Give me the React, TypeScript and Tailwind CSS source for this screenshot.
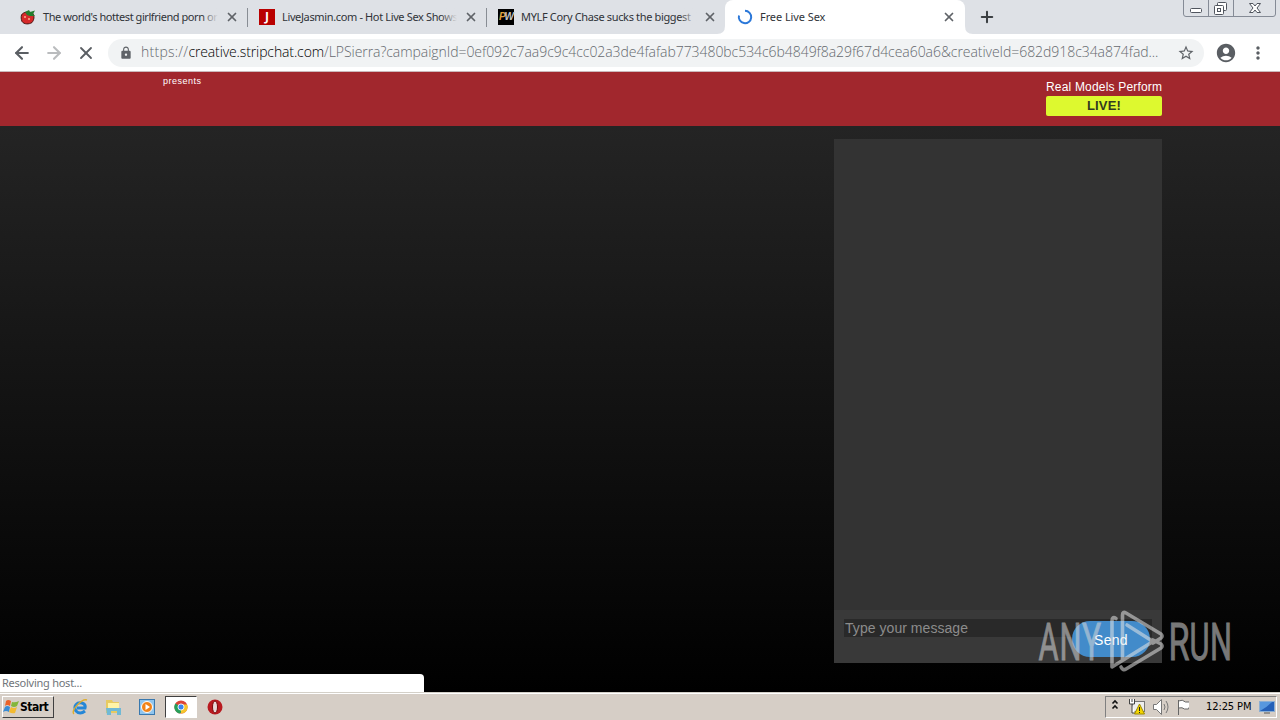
import React from 'react';
import { X, Plus, ArrowLeft, ArrowRight } from 'lucide-react';
import { MdLock, MdStarBorder, MdAccountCircle, MdMoreVert } from 'react-icons/md';

interface TabProps {
  title: string;
  icon: React.ReactNode;
  titleClass: string;
  active?: boolean;
}

function Tab({ title, icon, titleClass, active }: TabProps) {
  return (
    <div className={active ? 'relative flex h-[34px] w-[240px] items-center rounded-t-lg bg-white pl-3' : 'relative flex h-[34px] w-[239px] items-center pl-3'}>
      {icon}
      <div className="ml-[7px] h-4 w-[176px] whitespace-nowrap text-[11px] leading-4 text-[#303338]">
        <span className={titleClass}>{title}</span>
      </div>
      {!active && <div className="absolute left-[194px] top-2 h-[18px] w-[20px] bg-gradient-to-r from-[#dee1e6]/0 to-[#dee1e6] to-80%" />}
      <X className="absolute left-[217px] top-[10px] h-[14px] w-[14px] text-[#5f6368]" strokeWidth={3} />
    </div>
  );
}

// Favicons
function Strawberry() {
  return (
    <svg className="h-4 w-4 shrink-0" viewBox="0 0 16 16">
      <path d="M1.500 6C3.500 2.500 9 2.500 12.500 4C15 7 14 11 12 13.500C9 15.500 4 15.500 2 12.500C1 10 1 8 1.500 6Z" fill="#d6292a" stroke="#4a1512" />
      <path d="M5 3L9 1L10 3L15 1.500L13 5L15 7L10 7L7 6Z" fill="#237d2d" />
      <path d="M4 7h2v2H4zM8 9h2v2H8z" fill="#f28c72" />
    </svg>
  );
}

function JasminIcon() {
  return (
    <div className="flex h-4 w-4 shrink-0 items-center justify-center bg-[#b90000] font-['Open_Sans',sans-serif] text-[12px] font-bold leading-4 text-white">J</div>
  );
}

function PwIcon() {
  return (
    <div className="flex h-4 w-4 shrink-0 items-center justify-center bg-black font-['Liberation_Sans',sans-serif] text-[10px] font-bold italic leading-4 tracking-[-1px]">
      <span className="text-[#e0a33e]">P</span>
      <span className="text-[#c4c4c4]">W</span>
    </div>
  );
}

function Spinner() {
  return (
    <svg className="h-4 w-4 shrink-0" viewBox="0 0 16 16" fill="none">
      <path d="M8 1.8A6.2 6.2 0 1 1 2 6.4" stroke="#2b78d9" strokeWidth="2" />
    </svg>
  );
}

function WindowButtons() {
  return (
    <svg className="absolute right-[3px] top-0 h-[18px] w-[94px]" viewBox="0 0 94 18" fill="none" stroke="#858b96">
      <path d="M.5 0V14Q.5 16.5 3 16.5H90Q92.500 16.500 92.500 14V0M25.500 0V16M50.500 0V16" />
      <g stroke="#50555e" fill="#fff">
        <rect x="7.500" y="8.500" width="11" height="4" rx="1" />
        <rect x="34.500" y="2.500" width="9" height="8" rx="1" />
        <rect x="31.500" y="5.500" width="9" height="9" rx="1" />
        <rect x="34.500" y="8.500" width="3" height="3" />
        <path d="M66.500 3.500H70L72 6L74 3.500H77.500L74 8L77.500 12.500H74L72 10L70 12.500H66.500L70 8Z" />
      </g>
    </svg>
  );
}

function TabStrip() {
  return (
    <div className="relative flex h-[34px] bg-[#dee1e6] pl-2">
      <Tab title="The world's hottest girlfriend porn or" icon={<Strawberry />} titleClass="tracking-[-0.44px]" />
      <div className="absolute left-[247px] top-2 h-[19px] w-px bg-[#888d94]" />
      <Tab title="LiveJasmin.com - Hot Live Sex Shows" icon={<JasminIcon />} titleClass="tracking-[-0.36px]" />
      <div className="absolute left-[486px] top-2 h-[19px] w-px bg-[#888d94]" />
      <Tab title="MYLF Cory Chase sucks the biggest" icon={<PwIcon />} titleClass="tracking-[-0.35px]" />
      <Tab title="Free Live Sex" icon={<Spinner />} titleClass="tracking-[-0.08px]" active />
      <svg className="absolute left-[717px] top-[26px] h-2 w-[256px]" viewBox="0 0 256 8" fill="#fff">
        <path d="M0 8Q8 8 8 0V8ZM248 0Q248 8 256 8H248Z" />
      </svg>
      <Plus className="ml-[13px] mt-2 h-[18px] w-[18px] text-[#3c4043]" strokeWidth={2.7} />
      <WindowButtons />
    </div>
  );
}

function Toolbar() {
  return (
    <div className="flex h-[38px] items-center border-b border-[#cbb9bb] bg-white">
      <ArrowLeft className="ml-3 h-5 w-5 text-[#5a5e63]" strokeWidth={2.5} />
      <ArrowRight className="ml-3 h-5 w-5 text-[#babcbe]" strokeWidth={2.5} />
      <X className="ml-3 h-5 w-5 text-[#5a5e63]" strokeWidth={2.2} />
      <div className="ml-3 flex h-7 w-[1096px] items-center rounded-full bg-[#f1f3f4] pl-[11px]">
        <MdLock className="h-[14px] w-[14px] text-[#5f6368]" />
        <div className="mb-[2px] ml-2 w-[1026px] shrink-0 whitespace-nowrap font-['Open_Sans',sans-serif] text-[14px] font-light leading-5 text-[#65696e]">
          <span className="tracking-[-0.055px]">
            <span className="tracking-[0.25px]">https://</span>
            <span className="tracking-[-0.12px] text-black">creative.stripchat.com</span>/LPSierra?campaignId=0ef092c7aa9c9c4cc02a3de4fafab773480bc534c6b4849f8a29f67d4cea60a6&amp;creativeId=682d918c34a874fad...
          </span>
        </div>
        <MdStarBorder className="ml-[10px] h-[18px] w-[18px] shrink-0 text-[#5f6368]" />
      </div>
      <MdAccountCircle className="ml-[11px] h-[22px] w-[22px] text-[#5a5e63]" />
      <MdMoreVert className="ml-[11px] h-5 w-5 text-[#5a5e63]" />
    </div>
  );
}

function Watermark() {
  return (
    <svg className="pointer-events-none absolute left-[1035px] top-[605px] z-10 h-[72px] w-[204px]" viewBox="0 0 204 72" fill="none" opacity="0.55">
      <g fill="#d8d8d8" stroke="#d8d8d8" strokeWidth="0.9" fontFamily="Roboto" fontSize="52">
        <text x="3.500" y="54.500" textLength="20" lengthAdjust="spacingAndGlyphs">A</text>
        <text x="24.500" y="54.500" textLength="22" lengthAdjust="spacingAndGlyphs">N</text>
        <text x="47" y="54.500" textLength="19" lengthAdjust="spacingAndGlyphs">Y</text>
        <text x="133.500" y="54.500" textLength="21" lengthAdjust="spacingAndGlyphs">R</text>
        <text x="154.500" y="54.500" textLength="20" lengthAdjust="spacingAndGlyphs">U</text>
        <text x="175" y="54.500" textLength="22" lengthAdjust="spacingAndGlyphs">N</text>
      </g>
      <g stroke="#e4e4e4" strokeWidth="3.600" strokeLinejoin="round" strokeLinecap="round">
        <path d="M81 13.500Q77 11 77 16V62L118 36.500L92 20" />
        <path d="M87.500 54V10Q87.500 6 91 8L126 29Q128 31 126 33L118 38" />
        <path d="M86 62Q88 66 91 64L126 43Q128 41 126 39L118 35" />
      </g>
    </svg>
  );
}

function TrayIcons() {
  return (
    <svg className="h-5 w-[78px]" viewBox="0 0 78 20" fill="none">
      <path d="M1.500 6.500l2.500-2.500 2.500 2.500M1.500 11.500l2.500-2.500 2.500 2.500" stroke="#111" strokeWidth="1.600" />
      <rect x="21.500" y="4.500" width="12" height="10" fill="#eee" stroke="#777" />
      <path d="M18.500 2v5h5V2M21 2v3M21 7v9h3" stroke="#444" fill="#fff" />
      <path d="M28.500 7L33.500 17H23.500Z" fill="#f4d500" stroke="#9c8900" />
      <path d="M28.500 10v4M28.500 15v1" stroke="#222" />
      <path d="M42.500 7.500h3l5-5v15l-5-5h-3Z" fill="#fff" stroke="#777" />
      <path d="M53 7q2 3 0 6M55 4q4 6 0 12" stroke="#777" />
      <path d="M67.500 3v15M67.500 4q4-2 7 1h6l-3 7h-4q-2-2-6-1" fill="#fff" stroke="#666" />
    </svg>
  );
}

function Taskbar() {
  return (
    <div className="flex h-[28px] items-center border-t border-[#d4d0c8] bg-[#d6cec6] pt-px font-['DejaVu_Sans_Condensed','DejaVu_Sans',sans-serif] shadow-[inset_0_1px_0_#fff]">
      <div className="ml-[2px] flex h-[22px] w-[52px] items-center border border-b-[#404040] border-l-white border-r-[#404040] border-t-white">
        <svg className="h-4 w-4 shrink-0" viewBox="0 0 16 16">
          <path d="M3 2Q5 0 8 2L7 7Q4 5 2 7Z" fill="#ea6228" />
          <path d="M9 3Q12 4 16 2L14 7Q11 9 8 7Z" fill="#83b63b" />
          <path d="M2 8Q4 6 7 8L6 13Q3 11 0 13Z" fill="#398bd4" />
          <path d="M8 8Q11 10 14 8L12 14Q9 15 6 13Z" fill="#f3ba31" />
        </svg>
        <span className="ml-px text-[12px] font-bold tracking-[-0.5px] text-black">Start</span>
      </div>
      <svg className="ml-[18px] h-4 w-4" viewBox="0 0 16 16" fill="none">
        <path d="M13 12Q8 16 4 12C1 7 5 3 10 4Q14 5 13 9H5" stroke="#2587d7" strokeWidth="3" />
        <path d="M2 15C-2 12 10-1 15 1" stroke="#dfae2c" strokeWidth="1.400" />
      </svg>
      <svg className="ml-[17px] h-4 w-4" viewBox="0 0 16 16">
        <path d="M1 1h6l1 2h6v11H1Z" fill="#e7ca61" />
        <path d="M3 4h11v5H3Z" fill="#fff4a7" />
        <path d="M1 9h15v7h-4v-4H6v4H2Z" fill="#70b9d5" />
      </svg>
      <svg className="ml-[18px] h-4 w-4" viewBox="0 0 16 16">
        <rect x=".5" y=".5" width="15" height="15" fill="#8fc5ee" stroke="#3978ae" />
        <circle cx="8" cy="8" r="5.500" fill="#f18318" stroke="#fff" />
        <path d="M6.500 5v6l4.500-3Z" fill="#fff" />
      </svg>
      <div className="ml-[10px] flex h-[22px] w-8 items-center justify-center border border-b-white border-l-[#404040] border-r-white border-t-[#404040] bg-white">
        <svg className="h-[14px] w-[14px]" viewBox="0 0 16 16">
          <circle cx="8" cy="8" r="7.500" fill="#dc4437" />
          <path d="M8 8L1.500 4A7.500 7.500 0 0 0 7 15.500L11 9Z" fill="#25a05a" />
          <path d="M8 8V15.500A7.500 7.500 0 0 0 15 5H8Z" fill="#f5c52c" />
          <circle cx="8" cy="8" r="3.500" fill="#3984ef" stroke="#fff" />
        </svg>
      </div>
      <svg className="ml-[10px] h-4 w-4" viewBox="0 0 16 16">
        <circle cx="8" cy="8" r="7.500" fill="#b91a20" />
        <ellipse cx="8" cy="8" rx="2.500" ry="6" fill="#e8d9d8" stroke="#77090c" />
      </svg>
      <div className="ml-auto mr-[3px] flex h-[22px] w-[172px] items-center border border-b-white border-l-[#808080] border-r-white border-t-[#808080] pl-[5px]">
        <TrayIcons />
        <span className="ml-[17px] w-[47px] whitespace-nowrap text-[11px] tracking-[-0.1px] text-black">12:25 PM</span>
        <svg className="ml-[6px] h-4 w-4 shrink-0" viewBox="0 0 16 16">
          <rect x=".5" y="2.500" width="15" height="10" fill="#2560b8" stroke="#8baed3" />
          <path d="M1 12Q7 9 13 3H1Z" fill="#5797de" />
          <path d="M5 14h6" stroke="#555" />
        </svg>
      </div>
    </div>
  );
}

export default function App() {
  return (
    <div className="relative flex h-[720px] w-[1280px] flex-col overflow-hidden bg-black font-['Noto_Sans',sans-serif]">
      <TabStrip />
      <Toolbar />

      {/* Page header */}
      <div className="flex h-[54px] justify-between bg-[#a1272d] pl-[163px] pr-[118px] font-['Liberation_Sans',sans-serif] text-white">
        <div className="mt-[3px] text-[9px] leading-3 tracking-[0.5px]">presents</div>
        <div className="mt-2 w-[116px]">
          <div className="whitespace-nowrap text-[12px] leading-[14px] tracking-[0.18px]">Real Models Perform</div>
          <div className="mt-[2px] h-5 rounded-[2px] bg-[#ddf92f] text-center text-[13px] font-bold leading-5 tracking-[0.15px] text-[#333b20]">LIVE!</div>
        </div>
      </div>

      {/* Chat */}
      <div className="relative flex h-[566px] justify-end bg-linear-to-b/srgb from-[#242424] to-black pr-[118px] pt-[13px]">
        <div className="flex h-[524px] w-[328px] flex-col bg-[#333333] font-['Liberation_Sans',sans-serif]">
          <div className="flex-1" />
          <div className="relative h-[53px] bg-[#393939] px-[10px] pt-[9px]">
            <div className="h-[18px] bg-[#292929] pl-px text-[14px] leading-[18px] tracking-[0.05px] text-[#8c8c8c]">Type your message</div>
            <button className="absolute left-[238px] top-[11px] h-9 w-[78px] rounded-full bg-[#428bca] pt-[2px] text-[14px] tracking-[0.3px] text-white">Send</button>
          </div>
        </div>
        <div className="absolute bottom-0 left-0 h-[18px] w-[424px] rounded-tr-[4px] bg-white pl-[2px] text-[11px] leading-[18px] tracking-[-0.25px] text-[#70757a]">Resolving host...</div>
      </div>

      <Taskbar />
      <Watermark />
    </div>
  );
}
